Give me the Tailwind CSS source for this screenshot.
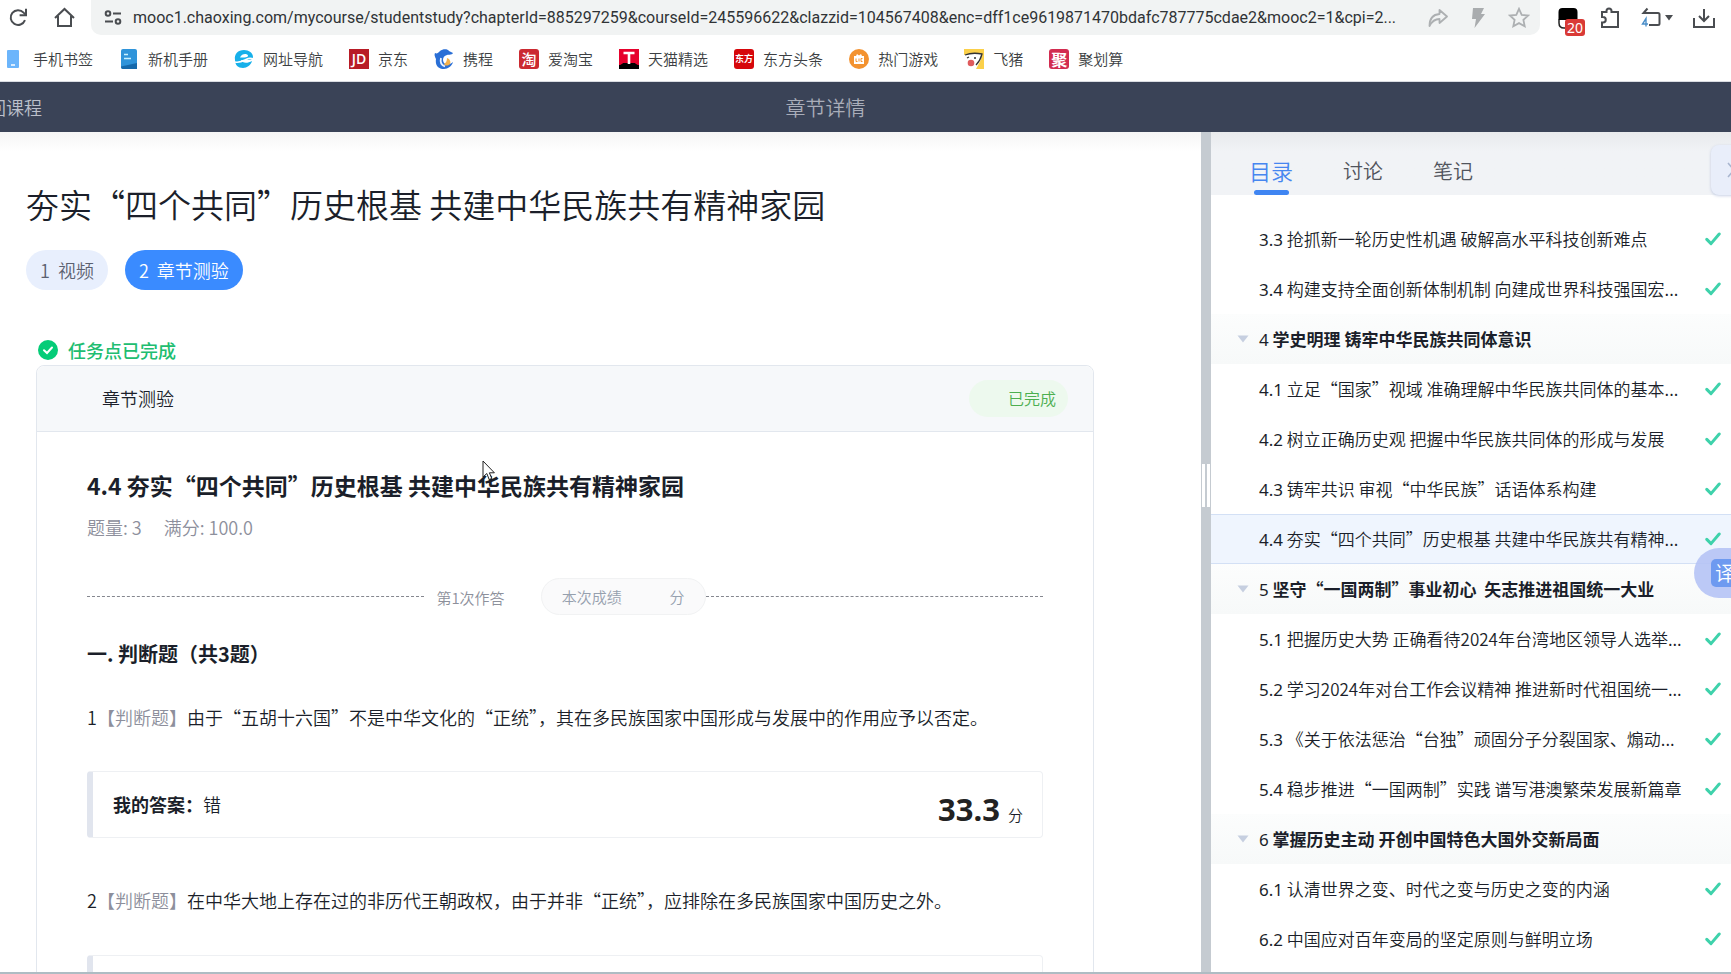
<!DOCTYPE html>
<html lang="zh-CN">
<head>
<meta charset="utf-8">
<meta name="viewport" content="width=device-width, initial-scale=1">
<title>章节详情</title>
<script src="https://cdn.jsdelivr.net/npm/@tailwindcss/browser@4"></script>
</head>
<body class="flex h-screen flex-col overflow-hidden bg-white font-['Noto_Sans_CJK_SC','Noto_Sans',sans-serif] font-[350] text-[#1b1f2a]">

<svg class="hidden" aria-hidden="true">
  <symbol id="check" viewBox="0 0 16 14"><path d="M1.8 7.4 6 11.6 14.2 2" fill="none" stroke="#3ed2ab" stroke-width="3" stroke-linecap="round" stroke-linejoin="round"/></symbol>
  <symbol id="arrow" viewBox="0 0 12 8"><path d="M.5.5h11L6 7.5z" fill="#c6cfe0"/></symbol>
</svg>

<!-- Browser toolbar -->
<div class="flex h-[35px] shrink-0 items-stretch text-[#4a4d51]">
  <div class="flex w-[91px] shrink-0 items-center gap-[25px] pl-2">
    <button aria-label="刷新"><svg class="size-[21px]" viewBox="0 0 21 21" fill="none" stroke="currentColor" stroke-width="2"><path d="M17 13.2A7.4 7.4 0 1 1 15.6 5.6L17.6 7.6"/><path d="M18 1.8v6.4h-6.4"/></svg></button>
    <button aria-label="主页"><svg class="size-[21px]" viewBox="0 0 21 21" fill="none" stroke="currentColor" stroke-width="2"><path d="M1 11 10.500 2 20 11M4 9v10h13V9"/></svg></button>
  </div>
  <div class="flex min-w-0 flex-1 items-center rounded-b-[10px] bg-[#f1f3f3] pl-3">
    <svg class="size-5 shrink-0" viewBox="0 0 20 20" fill="none" stroke="currentColor" stroke-width="2"><circle cx="5" cy="5.500" r="2.300"/><path d="M10 5.500h8M2 13.500h8"/><circle cx="15" cy="13.500" r="2.300"/></svg>
    <input aria-label="地址" readonly class="ml-2.5 min-w-0 flex-1 bg-transparent font-['Roboto',sans-serif] text-[16px] leading-6 font-normal text-[#303336] outline-none" value="mooc1.chaoxing.com/mycourse/studentstudy?chapterId=885297259&amp;courseId=245596622&amp;clazzid=104567408&amp;enc=dff1ce9619871470bdafc787775cdae2&amp;mooc2=1&amp;cpi=2...">
    <div class="flex w-[114px] shrink-0 items-center gap-5 pl-0.5 text-[#adb0b2]">
      <button aria-label="分享"><svg class="size-5" viewBox="0 0 20 20" fill="none" stroke="currentColor" stroke-width="1.800" stroke-linejoin="round"><path d="M11.500 2 19 8.500 11.500 15v-4C7 11 4 13 1.500 18 1.500 11 5 6.500 11.500 6z"/></svg></button>
      <button aria-label="极速"><svg class="size-5" viewBox="0 0 20 20" fill="#a9acae"><path d="M5 0h11l-3 6h4L6.500 20l1.500-9H4z"/></svg></button>
      <button aria-label="收藏"><svg class="size-[22px]" viewBox="0 0 22 22" fill="none" stroke="currentColor" stroke-width="1.800"><path d="m11 1.800 2.700 6 6.500.7-4.800 4.400 1.300 6.400L11 16.100l-5.700 3.200 1.300-6.400L1.800 8.500l6.500-.7z"/></svg></button>
    </div>
  </div>
  <div class="flex w-[191px] shrink-0 items-center gap-5 pl-[17px]">
    <button aria-label="扩展，20 条" class="relative"><svg class="size-[22px]" viewBox="0 0 22 22"><path d="M1.500 12.500V5a4 4 0 0 1 4-4h11a4 4 0 0 1 4 4v7.500" fill="#000"/><path d="M2 12v4c0 3 2 5 5 5h7" fill="#fff" stroke="#222" stroke-width="1.500"/><path d="M2 9h18v4H2z" fill="#000"/></svg><span class="absolute top-3 left-2 h-[17px] rounded-[3px] bg-[#d93a36] px-0.5 font-['Noto_Sans',sans-serif] text-[14px] leading-[17px] font-normal text-white">20</span></button>
    <button aria-label="扩展程序"><svg class="size-[22px]" viewBox="0 0 22 22" fill="none" stroke="currentColor" stroke-width="2"><path d="M3 5h4.500V4a2.500 2.500 0 0 1 5 0v1H19v15H3v-4.500h1a2.700 2.700 0 0 0 0-5.500H3z"/></svg></button>
    <button aria-label="恢复标签页" class="flex items-center gap-1"><svg class="h-[22px] w-5" viewBox="0 0 20 22"><path d="M6.500 1.500 2.500 6H17a1.500 1.500 0 0 1 1.500 1.500v9A1.500 1.500 0 0 1 17 18H8" fill="none" stroke="#4a4d51" stroke-width="2"/><path d="M5 19.500v-8L1.500 17H7" fill="none" stroke="#4b8fc9" stroke-width="1.400"/></svg><svg class="h-1.5 w-2" viewBox="0 0 8 6"><path d="M0 0h8L4 5.500z" fill="currentColor"/></svg></button>
    <button aria-label="下载"><svg class="size-[22px]" viewBox="0 0 22 22" fill="none" stroke="currentColor" stroke-width="2"><path d="M1 11v9h20v-9M11 2v12M6 9l5 5 5-5"/></svg></button>
  </div>
</div>

<!-- Bookmarks -->
<nav aria-label="书签" class="flex h-[47px] shrink-0 items-center gap-[26px] border-b border-[#d9dce2] pb-0.5 pl-1 pt-1 text-[15px] leading-6 whitespace-nowrap text-[#3c3f43]">
  <a href="#" class="flex items-center gap-[9px]"><svg class="size-5" viewBox="0 0 20 20"><rect x="3" y="1" width="12" height="18" rx="1" fill="#6cb5fb"/><path d="M7 16h4" stroke="#fff" stroke-width="1.500"/></svg>手机书签</a>
  <a href="#" class="flex items-center gap-[9px]"><svg class="size-5" viewBox="0 0 20 20"><path d="M4 0h12a2 2 0 0 1 2 2v18H4a2 2 0 0 1-2-2V2a2 2 0 0 1 2-2z" fill="#2f94da"/><path d="M2 17.500 18 14v6H4c-1.500 0-2-1-2-2.500z" fill="#1569ab"/><path d="M5 5.500h4M5 9.500h7" stroke="#c9f1ff" stroke-width="1.500"/></svg>新机手册</a>
  <a href="#" class="flex items-center gap-[9px]"><svg class="size-5" viewBox="0 0 20 20"><path d="M1 11C0 5 4 1 10 1c5 0 9 3 9 7 0 2-2 3-4 3H7c1 3 6 4 11 1-1 4-5 7-9 7-5 0-8-3-8-8z" fill="#17b0ea"/><path d="M6 8.500C7.500 4.500 13 4 14 6.500c0 2-3 2-8 2z" fill="#fff"/><path d="M1 13c5 1 8-1 11-2.500 2-1 5-1.500 7-.5" fill="none" stroke="#fff" stroke-width="1.600"/></svg>网址导航</a>
  <a href="#" class="flex items-center gap-[9px]"><span class="grid size-5 place-items-center bg-[#b81c26] font-['Open_Sans',sans-serif] text-[14px] leading-5 font-semibold text-white">JD</span>京东</a>
  <a href="#" class="flex items-center gap-[9px]"><svg class="size-5" viewBox="0 0 20 20"><path d="M1 4C3 5 4 4 6 2c3-2.500 8-2 9 0l4 2c-1 2-4 1.500-6 2-4 1-5 5-3 8 2 2 6 2 9-1-1 4-5 7-9 7-6 0-9-4-8-10C1 8 0 6 1 4z" fill="#2a6fd6"/><path d="M13 9c3 1 4 4 3 6-2 2-5 2-6 0 2-1 3-3 3-6z" fill="#f4b14b"/><path d="M7 9c-1 4 0 7 4 8.500" fill="none" stroke="#e8f2ff" stroke-width="1.800"/></svg>携程</a>
  <a href="#" class="flex items-center gap-[9px]"><span class="grid size-5 place-items-center rounded-[3px] bg-[#cb2a31] text-[15px] leading-5 font-medium text-white">淘</span>爱淘宝</a>
  <a href="#" class="flex items-center gap-[9px]"><svg class="size-5" viewBox="0 0 20 20"><path fill="#e6022d" d="M0 0h20v20H0z"/><path d="M0 20v-4c3 0 3-2 5-2h10c2 0 2 2 5 2v4z" fill="#000"/><path d="M4.500 4h11M10 4v11" stroke="#fff" stroke-width="2.600"/></svg>天猫精选</a>
  <a href="#" class="flex items-center gap-[9px]"><span class="grid size-5 place-items-center rounded-[3px] bg-[#d6070b] text-[9px] leading-5 font-bold text-white">东方</span>东方头条</a>
  <a href="#" class="flex items-center gap-[9px]"><svg class="size-5" viewBox="0 0 20 20"><circle cx="10" cy="10" r="10" fill="#f3922f"/><path d="M5 7h2l1-2 2 1.500L12 5l1 2h2v8H5z" fill="#fff"/><path d="M7 9.500v3h1.500M10 9.500v3M13.500 9.500H12v3h1.500" fill="none" stroke="#f3922f"/></svg>热门游戏</a>
  <a href="#" class="flex items-center gap-[9px]"><svg class="size-5" viewBox="0 0 20 20"><path fill="#fbd04a" d="M0 0h20v20H0z"/><path d="M0 6c4-1 10-2 18-1 0 5-4 11-6 15H0z" fill="#fff"/><path d="M1 6c5-2 12-2 17-1-1 4-4 9-6 11M3 9l2-1M10 9h2" fill="none" stroke="#333" stroke-width="1.300"/><circle cx="7" cy="14" r="3.300" fill="#e05a5c"/></svg>飞猪</a>
  <a href="#" class="flex items-center gap-[9px]"><span class="grid size-5 place-items-center rounded-[3px] bg-[#d22c50] text-[16px] leading-5 font-bold text-white">聚</span>聚划算</a>
</nav>

<!-- Course header -->
<header class="grid h-[50px] shrink-0 grid-cols-[80px_1fr_160px] items-center bg-[#3a4357] text-[#a9adb9]">
  <a href="#" class="-ml-[30px] text-[18px] leading-6 whitespace-nowrap text-[#bcc0cb]">返回课程</a>
  <h1 class="pt-0.5 text-center text-[20px] leading-7">章节详情</h1>
</header>

<div class="flex min-h-0 flex-1 border-b-2 border-[#aebcc3]">
  <!-- Chapter content -->
  <main class="min-w-0 flex-1 overflow-hidden bg-linear-to-b from-[#f5f5f5] to-white to-[20px] pt-[50px] pl-[26px]">
    <h2 class="text-[33px] leading-[44px] whitespace-nowrap">夯实“四个共同”历史根基 共建中华民族共有精神家园</h2>
    <div class="mt-6 flex gap-[17px] text-[18px] leading-10">
      <button class="h-10 rounded-full bg-[#e8effd] px-3.5 leading-[38px] text-[#5b6070]">1&nbsp; 视频</button>
      <button class="h-10 rounded-full bg-[#3a8bff] px-3.5 leading-[38px] text-white">2&nbsp; 章节测验</button>
    </div>
    <div class="mt-12 ml-3 flex items-center gap-2.5 text-[18px] leading-6 font-medium text-[#20bd70]">
      <svg class="size-5" viewBox="0 0 20 20"><circle cx="10" cy="10" r="10" fill="#05cc78"/><path d="m6 10.200 3 2.800 5-5.500" fill="none" stroke="#fff" stroke-width="2" stroke-linecap="round"/></svg>任务点已完成
    </div>

    <section class="mt-[3px] mr-[107px] ml-2.5 rounded-t-[8px] border border-[#e2e7ee] text-[18px] leading-7">
      <div class="flex h-[66px] items-center justify-between rounded-t-[8px] border-b border-[#e2e7ee] bg-[#f6f8fa] pr-[25px] pl-[65px]">
        <h3 class="pb-0.5">章节测验</h3>
        <span class="rounded-full bg-[#edf9ee] pr-3 pl-[39px] text-[16px] leading-[37px] text-[#4caf50]">已完成</span>
      </div>
      <div class="px-[50px] pt-[37px]">
        <h3 class="text-[23px] leading-8 font-bold whitespace-nowrap">4.4 夯实“四个共同”历史根基 共建中华民族共有精神家园</h3>
        <p class="mt-3.5 flex gap-[22px] leading-6 text-[#8d8f9c]"><span>题量: 3</span><span>满分: 100.0</span></p>
        <div class="mt-[39px] flex items-center text-[15px] text-[#8d909b]">
          <span class="flex-1 border-t border-dashed border-[#85878f]"></span>
          <span class="mr-9 ml-3 pt-0.5">第1次作答</span>
          <span class="flex w-[165px] justify-between rounded-full border border-[#f1f2f3] bg-[#fafafb] px-5 leading-[35px] text-[#96a0ae]"><span>本次成绩</span><span>分</span></span>
          <span class="flex-1 border-t border-dashed border-[#85878f]"></span>
        </div>
        <h4 class="mt-[25px] text-[20px] font-bold">一. 判断题（共3题）</h4>

        <p class="mt-[35px] whitespace-nowrap">1<span class="text-[#8d8f9c]">【判断题】</span>由于“五胡十六国”不是中华文化的“正统”，其在多民族国家中国形成与发展中的作用应予以否定。</p>
        <div class="mt-10 flex h-[67px] items-center justify-between rounded-[4px] border border-l-[6px] border-[#eef0f3] border-l-[#e1e5ee] pr-[19px] pl-5">
          <p class="pb-0.5"><b>我的答案：</b>错</p>
          <p class="flex items-baseline gap-2 pt-2"><b class="font-['Noto_Sans',sans-serif] text-[31px] leading-10 text-[#222]">33.3</b><span class="text-[15px]">分</span></p>
        </div>

        <p class="mt-12 whitespace-nowrap">2<span class="text-[#8d8f9c]">【判断题】</span>在中华大地上存在过的非历代王朝政权，由于并非“正统”，应排除在多民族国家中国历史之外。</p>
        <div class="mt-[41px] h-[67px] rounded-[4px] border border-l-[6px] border-[#eef0f3] border-l-[#e1e5ee]"></div>
      </div>
    </section>
  </main>

  <!-- Splitter -->
  <div role="separator" aria-orientation="vertical" class="flex w-2.5 shrink-0 flex-col bg-[#c5cbd1] pt-[332px]">
    <span class="flex h-[43px] justify-center gap-0.5"><i class="w-[3px] bg-white"></i><i class="w-[3px] bg-white"></i></span>
  </div>

  <!-- Catalogue -->
  <aside class="relative flex w-[520px] shrink-0 flex-col overflow-hidden">
    <div role="tablist" class="flex h-[63px] shrink-0 items-stretch gap-[50px] bg-linear-to-b from-[#e8eaec] to-[#f1f3f6] to-[20px] pl-[38px] text-[20px] leading-[77px] text-[#50545c]">
      <button role="tab" aria-selected="true" class="flex flex-col items-center justify-end text-[22px] leading-10 text-[#4686f0]">目录<span class="h-[5px] w-[35px] rounded-full bg-[#3f85f2]"></span></button>
      <button role="tab" aria-selected="false">讨论</button>
      <button role="tab" aria-selected="false">笔记</button>
    </div>
    <ul class="pt-[19px] text-[17px] leading-[50px] whitespace-nowrap [&_svg]:shrink-0">
      <li><a href="#" class="flex h-[50px] items-center justify-between pr-2.5 pl-12"><span><span class="font-['Noto_Sans',sans-serif] font-normal">3.3</span> 抢抓新一轮历史性机遇 破解高水平科技创新难点</span><svg class="h-3.5 w-4"><use href="#check"/></svg></a></li>
      <li><a href="#" class="flex h-[50px] items-center justify-between pr-2.5 pl-12"><span><span class="font-['Noto_Sans',sans-serif] font-normal">3.4</span> 构建支持全面创新体制机制 向建成世界科技强国宏...</span><svg class="h-3.5 w-4"><use href="#check"/></svg></a></li>
      <li><button class="flex h-[50px] w-full items-center gap-2.5 bg-linear-to-b from-[#fcfdfd] to-[#f7f9f9] pl-[26px]"><svg class="h-2 w-3"><use href="#arrow"/></svg><span><span class="font-['Noto_Sans',sans-serif] font-normal">4</span> <b>学史明理 铸牢中华民族共同体意识</b></span></button></li>
      <li><a href="#" class="flex h-[50px] items-center justify-between pr-2.5 pl-12"><span><span class="font-['Noto_Sans',sans-serif] font-normal">4.1</span> 立足“国家”视域 准确理解中华民族共同体的基本...</span><svg class="h-3.5 w-4"><use href="#check"/></svg></a></li>
      <li><a href="#" class="flex h-[50px] items-center justify-between pr-2.5 pl-12"><span><span class="font-['Noto_Sans',sans-serif] font-normal">4.2</span> 树立正确历史观 把握中华民族共同体的形成与发展</span><svg class="h-3.5 w-4"><use href="#check"/></svg></a></li>
      <li><a href="#" class="flex h-[50px] items-center justify-between pr-2.5 pl-12"><span><span class="font-['Noto_Sans',sans-serif] font-normal">4.3</span> 铸牢共识 审视“中华民族”话语体系构建</span><svg class="h-3.5 w-4"><use href="#check"/></svg></a></li>
      <li><a href="#" aria-current="page" class="flex h-[50px] items-center justify-between border-y border-[#d3e0f5] bg-[#eff5fe] pr-2.5 pl-12"><span><span class="font-['Noto_Sans',sans-serif] font-normal">4.4</span> 夯实“四个共同”历史根基 共建中华民族共有精神...</span><svg class="h-3.5 w-4"><use href="#check"/></svg></a></li>
      <li><button class="flex h-[50px] w-full items-center gap-2.5 bg-linear-to-b from-[#fcfdfd] to-[#f7f9f9] pl-[26px]"><svg class="h-2 w-3"><use href="#arrow"/></svg><span><span class="font-['Noto_Sans',sans-serif] font-normal">5</span> <b>坚守“一国两制”事业初心&nbsp; 矢志推进祖国统一大业</b></span></button></li>
      <li><a href="#" class="flex h-[50px] items-center justify-between pr-2.5 pl-12"><span><span class="font-['Noto_Sans',sans-serif] font-normal">5.1</span> 把握历史大势 正确看待2024年台湾地区领导人选举...</span><svg class="h-3.5 w-4"><use href="#check"/></svg></a></li>
      <li><a href="#" class="flex h-[50px] items-center justify-between pr-2.5 pl-12"><span><span class="font-['Noto_Sans',sans-serif] font-normal">5.2</span> 学习2024年对台工作会议精神 推进新时代祖国统一...</span><svg class="h-3.5 w-4"><use href="#check"/></svg></a></li>
      <li><a href="#" class="flex h-[50px] items-center justify-between pr-2.5 pl-12"><span><span class="font-['Noto_Sans',sans-serif] font-normal">5.3</span> 《关于依法惩治“台独”顽固分子分裂国家、煽动...</span><svg class="h-3.5 w-4"><use href="#check"/></svg></a></li>
      <li><a href="#" class="flex h-[50px] items-center justify-between pr-2.5 pl-12"><span><span class="font-['Noto_Sans',sans-serif] font-normal">5.4</span> 稳步推进“一国两制”实践 谱写港澳繁荣发展新篇章</span><svg class="h-3.5 w-4"><use href="#check"/></svg></a></li>
      <li><button class="flex h-[50px] w-full items-center gap-2.5 bg-linear-to-b from-[#fcfdfd] to-[#f7f9f9] pl-[26px]"><svg class="h-2 w-3"><use href="#arrow"/></svg><span><span class="font-['Noto_Sans',sans-serif] font-normal">6</span> <b>掌握历史主动 开创中国特色大国外交新局面</b></span></button></li>
      <li><a href="#" class="flex h-[50px] items-center justify-between pr-2.5 pl-12"><span><span class="font-['Noto_Sans',sans-serif] font-normal">6.1</span> 认清世界之变、时代之变与历史之变的内涵</span><svg class="h-3.5 w-4"><use href="#check"/></svg></a></li>
      <li><a href="#" class="flex h-[50px] items-center justify-between pr-2.5 pl-12"><span><span class="font-['Noto_Sans',sans-serif] font-normal">6.2</span> 中国应对百年变局的坚定原则与鲜明立场</span><svg class="h-3.5 w-4"><use href="#check"/></svg></a></li>
    </ul>
    <button aria-label="收起目录" class="absolute top-[13px] -right-5 flex h-[50px] w-10 items-center rounded-[8px] bg-[#e9eefa] pl-4 shadow-[0_1px_3px_rgba(120,140,190,0.4)]"><svg class="h-4 w-2.5" viewBox="0 0 10 16" fill="none" stroke="#a9b6cf" stroke-width="1.500"><path d="m1 1 6 7-6 7"/></svg></button>
    <button aria-label="翻译" class="absolute top-[416px] -right-5 flex h-[50px] w-[57px] items-center rounded-l-full bg-[#b5c3f5]/90 pl-[17px]"><span class="h-7 w-8 rounded-[5px] bg-[#6e9af0] pl-1 text-left text-[20px] leading-7 text-white">译</span></button>
  </aside>
</div>

<!-- Mouse pointer -->
<svg class="pointer-events-none absolute top-[460px] left-[482px] h-[21px] w-3.5" viewBox="0 0 14 21"><path d="M1 1v16l3.800-3.500L7.200 19.500l2.600-1-2.400-5.700h5z" fill="#fff" stroke="#222" stroke-width="1"/></svg>
</body>
</html>
